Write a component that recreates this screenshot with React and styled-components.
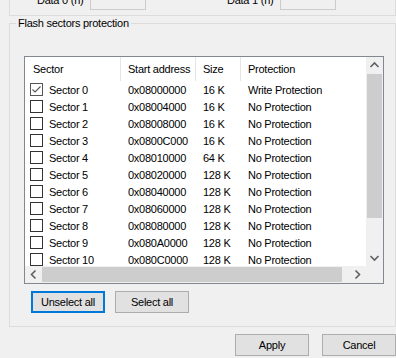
import styled, { createGlobalStyle } from "styled-components";

const GlobalStyle = createGlobalStyle`
  html, body {
    margin: 0;
    padding: 0;
    background: #f0f0f0;
    overflow: hidden;
  }
  body {
    font-family: "Liberation Sans", Arial, sans-serif;
    font-size: 11px;
    letter-spacing: -0.25px;
    color: #000;
  }
  #root {
    width: 396px;
    height: 358px;
    overflow: hidden;
  }
`;

//the option bytes group above, only its bottom edge shows
const TopGroup = styled.div`
  box-sizing: border-box;
  margin: -22px 0 0 9px;
  width: 387px;
  height: 38px;
  border: 1px solid #dcdcdc;
  display: flex;
  align-items: flex-end;
  gap: 81px;
  padding: 0 0 5px 27px;
`;

const Field = styled.div`
  display: grid;
  grid-template-columns: 53px 56px;
  align-items: center;
`;

const Edit = styled.div`
  box-sizing: border-box;
  height: 21px;
  border: 1px solid #cccccc;
  background: #f0f0f0;
`;

//group box with legend, drawn like the win32 one
const GroupBox = styled.fieldset`
  box-sizing: border-box;
  margin: 1px 0 0 9px;
  width: 387px;
  border: 1px solid #dcdcdc;
  padding: 26px 0 13px 6px;
  min-width: 0;
`;

const Legend = styled.legend`
  padding: 0 2px;
  line-height: 13px;
  font-size: 11px;
`;

const GroupInner = styled.div`
  padding-left: 8px;
`;

const ListView = styled.div`
  box-sizing: border-box;
  width: 360px;
  height: 228px;
  border: 1px solid #828790;
  background: #fff;
  display: grid;
  grid-template-columns: 341px 17px;
  grid-template-rows: 209px 17px;
`;

const Viewport = styled.div`
  overflow: hidden;
`;

const COLS = "95px 75px 45px 133px";

const HeaderRow = styled.div`
  display: grid;
  grid-template-columns: ${COLS};
  height: 24px;
`;

const HeaderCell = styled.div`
  display: flex;
  align-items: center;
  padding-left: 7px;
  border-left: 1px solid ${(p) => (p.$first ? "transparent" : "#e5e5e5")};
  white-space: nowrap;
`;

const Row = styled.div`
  display: grid;
  grid-template-columns: ${COLS};
  height: 17px;
`;

const Cell = styled.div`
  display: flex;
  align-items: center;
  padding-left: ${(p) => (p.$first ? "5px" : "8px")};
  gap: 6px;
  white-space: nowrap;
`;

const Box = styled.span`
  box-sizing: border-box;
  width: 13px;
  height: 13px;
  border: 1px solid ${(p) => (p.$checked ? "#555" : "#333")};
  background: #fff;
  display: flex;
  align-items: center;
  justify-content: center;
  flex-shrink: 0;
`;

const VScroll = styled.div`
  background: #f0f0f0;
  display: grid;
  grid-template-rows: 17px 1fr 17px;
`;

const HScroll = styled.div`
  background: #f0f0f0;
  display: grid;
  grid-template-columns: 17px 1fr 17px;
`;

const Corner = styled.div`
  background: #f0f0f0;
`;

const Track = styled.div`
  display: flex;
  flex-direction: ${(p) => (p.$vertical ? "column" : "row")};
  padding: ${(p) => (p.$vertical ? "0 1px" : "1px 0")};
`;

const Thumb = styled.div`
  background: #cdcdcd;
  ${(p) => (p.$vertical ? `height: ${p.$size}px;` : `width: ${p.$size}px;`)}
  ${(p) => (p.$vertical ? "width: 100%;" : "height: 100%;")}
`;

const ArrowBtn = styled.div`
  display: flex;
  align-items: center;
  justify-content: center;
`;

const ButtonRow = styled.div`
  display: flex;
  gap: 10px;
  margin-top: 7px;
  padding-left: 7px;
`;

const Button = styled.button`
  box-sizing: border-box;
  width: 74px;
  height: 22px;
  margin: 0;
  padding: 0;
  background: #e1e1e1;
  border: ${(p) => (p.$focused ? "2px solid #0078d7" : "1px solid #adadad")};
  font-family: inherit;
  font-size: 11px;
  letter-spacing: -0.25px;
  color: #000;
`;

const Footer = styled.div`
  display: flex;
  justify-content: flex-end;
  gap: 13px;
  margin-top: 7px;
`;

const arrows = {
  up: "4.5,10 8.5,6 12.5,10",
  down: "4.5,7 8.5,11 12.5,7",
  left: "10.5,4.5 6.5,8.5 10.5,12.5",
  right: "6.5,4.5 10.5,8.5 6.5,12.5",
};

function Arrow({ dir }) {
  return (
    <ArrowBtn>
      <svg width="17" height="17" viewBox="0 0 17 17">
        <polyline points={arrows[dir]} fill="none" stroke="#606060" strokeWidth="1.6" />
      </svg>
    </ArrowBtn>
  );
}

const sectors = [
  ["0x08000000", "16 K", "Write Protection", true],
  ["0x08004000", "16 K"],
  ["0x08008000", "16 K"],
  ["0x0800C000", "16 K"],
  ["0x08010000", "64 K"],
  ["0x08020000", "128 K"],
  ["0x08040000", "128 K"],
  ["0x08060000", "128 K"],
  ["0x08080000", "128 K"],
  ["0x080A0000", "128 K"],
  ["0x080C0000", "128 K"],
  ["0x080E0000", "128 K"],
];

export default function App() {
  return (
    <>
      <GlobalStyle />
      <TopGroup>
        <Field>
          <span>Data 0 (h)</span>
          <Edit />
        </Field>
        <Field>
          <span>Data 1 (h)</span>
          <Edit />
        </Field>
      </TopGroup>

      <GroupBox>
        <Legend>Flash sectors protection</Legend>
        <GroupInner>
          <ListView>
            <Viewport>
              <HeaderRow>
                <HeaderCell $first>Sector</HeaderCell>
                <HeaderCell>Start address</HeaderCell>
                <HeaderCell>Size</HeaderCell>
                <HeaderCell>Protection</HeaderCell>
              </HeaderRow>
              {sectors.map(([addr, size, prot, checked], i) => (
                <Row key={addr}>
                  <Cell $first>
                    <Box $checked={checked}>
                      {checked && (
                        <svg width="11" height="11" viewBox="0 0 11 11">
                          <polyline points="1.5,5.5 4,8 9.5,2.5" fill="none" stroke="#555" strokeWidth="1.1" />
                        </svg>
                      )}
                    </Box>
                    Sector {i}
                  </Cell>
                  <Cell>{addr}</Cell>
                  <Cell>{size}</Cell>
                  <Cell>{prot || "No Protection"}</Cell>
                </Row>
              ))}
            </Viewport>
            <VScroll>
              <Arrow dir="up" />
              <Track $vertical>
                <Thumb $vertical $size={144} />
              </Track>
              <Arrow dir="down" />
            </VScroll>
            <HScroll>
              <Arrow dir="left" />
              <Track>
                <Thumb $size={300} />
              </Track>
              <Arrow dir="right" />
            </HScroll>
            <Corner />
          </ListView>
          <ButtonRow>
            <Button $focused>Unselect all</Button>
            <Button>Select all</Button>
          </ButtonRow>
        </GroupInner>
      </GroupBox>

      <Footer>
        <Button>Apply</Button>
        <Button>Cancel</Button>
      </Footer>
    </>
  );
}
